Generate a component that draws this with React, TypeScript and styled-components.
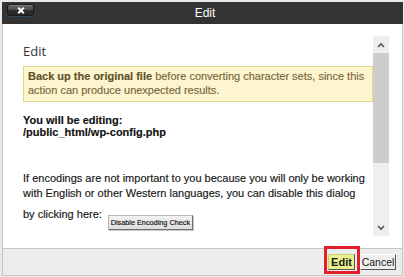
import React from "react";
import styled, { createGlobalStyle } from "styled-components";

const Global = createGlobalStyle`
  html, body { margin: 0; padding: 0; background: #e9e9e9; }
  body { font-family: "Liberation Sans", Arial, sans-serif; width: 404px; height: 277px; overflow: hidden; }
`;

const Page = styled.div`
  padding: 2px 0 0 2px;
`;

const Dialog = styled.div`
  width: 401px;
  display: flex;
  flex-direction: column;
`;

const TitleBar = styled.div`
  height: 22px;
  background: #333333;
  display: grid;
  grid-template-columns: 1fr auto 1fr;
  align-items: start;
  padding-left: 5px;
`;

const CloseButton = styled.button`
  margin-top: 2px;
  width: 27px;
  height: 12px;
  padding: 0;
  border: 1px solid #1a1a1a;
  border-radius: 3px;
  background: linear-gradient(#8a8a8a 0%, #5e5e5e 15%, #4a4a4a 50%, #2e2e2e 55%, #262626 100%);
  box-shadow: 0 1px 0 #2d4b66;
  display: flex;
  align-items: center;
  justify-content: center;
  justify-self: start;
`;

const Title = styled.div`
  color: #ffffff;
  font-size: 12px;
  line-height: 22px;
`;

const Body = styled.div`
  background: #ffffff;
  border-left: 1px solid #c6c6c6;
  border-right: 1px solid #c6c6c6;
  padding: 12px 13px 12px 20px;
  display: flex;
`;

const Content = styled.div`
  width: 350px;
  height: 200px;
  overflow: hidden;
  color: #161616;
  font-size: 11px;
  -webkit-text-stroke: 0.15px currentColor;
`;

const Heading = styled.h2`
  margin: 6px 0 0;
  font-family: "Open Sans", "Liberation Sans", sans-serif;
  font-weight: normal;
  font-size: 13px;
  line-height: 18px;
  color: #333333;
  -webkit-text-stroke: 0;
`;

const Warning = styled.div`
  margin-top: 6px;
  background: #fdf5d0;
  border: 1px solid #e2d98c;
  padding: 2px 4px 4px 4px;
  line-height: 14px;
  color: #766838;
  b { color: #5e5128; }
`;

const FilePath = styled.div`
  margin-top: 12px;
  font-weight: bold;
  line-height: 12px;
  color: #111111;
`;

const Para = styled.p`
  margin: 33px 0 0;
  line-height: 15px;
`;

const ClickRow = styled.div`
  margin-top: 6px;
  display: flex;
  align-items: flex-start;
  line-height: 15px;
`;

const SmallButton = styled.button`
  margin: 8px 0 0 6px;
  height: 15px;
  width: 85px;
  padding: 0;
  font-family: "Liberation Sans", Arial, sans-serif;
  font-size: 7.3px;
  color: #111;
  background: linear-gradient(#f2f2f2, #dedede);
  border: 1px solid #b8b8b8;
  border-right-color: #6f6f6f;
  border-bottom-color: #6f6f6f;
  box-shadow: 1px 1px 0 #c8c8c8;
`;

const ScrollBar = styled.div`
  width: 16px;
  height: 200px;
  background: #efefef;
  display: flex;
  flex-direction: column;
`;

const ArrowCell = styled.div`
  height: 17px;
  display: flex;
  align-items: center;
  justify-content: center;
`;

const Thumb = styled.div<{ $h: number }>`
  height: ${(p) => p.$h}px;
  background: #cdcdcd;
`;

const Track = styled.div`
  flex: 1;
`;

const Footer = styled.div`
  background: #ececec;
  border: 1px solid #c6c6c6;
  padding: 5px 6px 0 0;
  box-sizing: border-box;
  height: 28px;
  display: flex;
  justify-content: flex-end;
  align-items: flex-start;
  gap: 5px;
`;

const FooterButton = styled.button<{ $primary?: boolean }>`
  position: relative;
  height: 16px;
  padding: 0;
  font-family: "Liberation Sans", Arial, sans-serif;
  font-size: ${(p) => (p.$primary ? "11px" : "10.5px")};
  font-weight: ${(p) => (p.$primary ? "bold" : "normal")};
  color: #1a1a1a;
  background: ${(p) => (p.$primary ? "#ebf08c" : "#eeeeee")};
  border: 1px solid ${(p) => (p.$primary ? "#c9cf74" : "#ffffff")};
  border-right-color: #555;
  border-bottom-color: #555;
  width: ${(p) => (p.$primary ? "27px" : "36px")};
  white-space: nowrap;
`;

const Highlight = styled.span`
  position: absolute;
  left: -5px;
  right: -6px;
  top: -9px;
  bottom: -5px;
  border: 3px solid #e3202a;
  pointer-events: none;
`;

const Chevron = ({ up }: { up?: boolean }) => (
  <svg width="8" height="6" viewBox="0 0 8 6">
    <polyline
      points={up ? "1,5 4,2 7,5" : "1,1 4,4 7,1"}
      fill="none"
      stroke="#555"
      strokeWidth="1.6"
    />
  </svg>
);

export default function App() {
  return (
    <Page>
      <Global />
      <Dialog>
        <TitleBar>
          <CloseButton aria-label="close">
            <svg width="8" height="7" viewBox="0 0 8 7">
              <path d="M1.2 0.8 L6.8 6.2 M6.8 0.8 L1.2 6.2" stroke="#fff" strokeWidth="2" />
            </svg>
          </CloseButton>
          <Title>Edit</Title>
          <div />
        </TitleBar>
        <Body>
          <Content>
            <Heading>Edit</Heading>
            <Warning>
              <b>Back up the original file</b> before converting character sets, since this
              <br />
              action can produce unexpected results.
            </Warning>
            <FilePath>
              You will be editing:
              <br />
              /public_html/wp-config.php
            </FilePath>
            <Para>
              If encodings are not important to you because you will only be working
              <br />
              with English or other Western languages, you can disable this dialog
            </Para>
            <ClickRow>
              <span>by clicking here:</span>
              <SmallButton>Disable Encoding Check</SmallButton>
            </ClickRow>
          </Content>
          <ScrollBar>
            <ArrowCell>
              <Chevron up />
            </ArrowCell>
            <Thumb $h={110} />
            <Track />
            <ArrowCell>
              <Chevron />
            </ArrowCell>
          </ScrollBar>
        </Body>
        <Footer>
          <FooterButton $primary>
            Edit
            <Highlight />
          </FooterButton>
          <FooterButton>Cancel</FooterButton>
        </Footer>
      </Dialog>
    </Page>
  );
}
